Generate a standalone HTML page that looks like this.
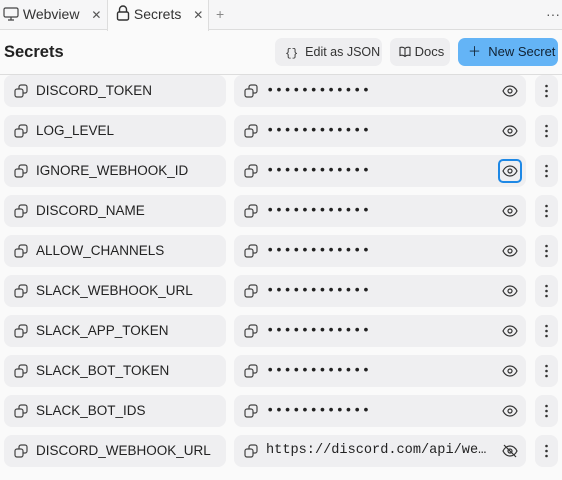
<!DOCTYPE html><html><head><style>
*{box-sizing:border-box;margin:0;padding:0}
body{width:562px;height:477px;background:#fafafa;font-family:"Liberation Sans",sans-serif;color:#222;position:relative;overflow:hidden}
.tabs{position:absolute;left:0;top:0;width:562px;height:30px;background:#f6f6f7;border-bottom:1px solid #ddd}
.tab{position:absolute;top:0;height:30px;font-size:14px;line-height:28px;color:#333;white-space:nowrap}
.act{left:107px;width:102px;background:#fafafa;border-left:1px solid #ddd;border-right:1px solid #ddd;height:31px}
h1{position:absolute;left:4px;top:43px;font-size:16.5px;font-weight:bold}
.btn{position:absolute;top:38px;height:28px;border-radius:7px;background:#eeeef0;font-size:13px;line-height:28px;color:#333;white-space:nowrap}
.hr{position:absolute;left:0;top:74px;width:562px;height:1px;background:#ddd}
.p{position:absolute;height:32px;background:#efeff1;border-radius:8px;font-size:13.5px;line-height:32px;white-space:nowrap}
.n{left:4px;width:222px;padding-left:32px}
.v{left:234px;width:292px;padding-left:32px;font-family:"Liberation Mono",monospace;font-size:14px;letter-spacing:0.3px}
.m{left:535px;width:23px}
.ic{position:absolute;left:10px;top:9px}
.eye{position:absolute;right:8px;top:10px;line-height:0}
.dots{position:absolute;left:10px;top:9px}
.vt{display:inline-block;width:230px;overflow:hidden}
</style></head><body>
<div class="tabs">
<div class="tab" style="left:3px"><svg width="16" height="14" style="vertical-align:-2px" viewBox="0 0 16 14" fill="none" stroke="#444" stroke-width="1.2"><rect x="1" y="1" width="14" height="9" rx="1.5"/><path d="M8 10v3M5 13h6"/></svg> Webview <span style="margin-left:8px;font-size:12px;color:#555">✕</span></div>
<div class="tab act"><span style="position:absolute;left:8px;top:0"><svg width="14" height="16" style="vertical-align:-2px" viewBox="0 0 14 16" fill="none" stroke="#333" stroke-width="1.4"><path d="M3.5 7V4.5a3.5 3.5 0 0 1 7 0V7"/><rect x="1.5" y="7" width="11" height="8" rx="1.5"/></svg> Secrets <span style="margin-left:8px;font-size:12px;color:#555">✕</span></span></div>
<div class="tab" style="left:216px;color:#888">+</div>
<div class="tab" style="left:546px;color:#555">···</div>
</div>
<h1>Secrets</h1>
<div class="btn" style="left:275px;width:107px;padding-left:10px;font-size:12.5px"><span style="font-family:'Liberation Mono';font-size:11px">{}</span>&nbsp; Edit as JSON</div>
<div class="btn" style="left:390px;width:60px;padding-left:9px"><svg width="12" height="11" viewBox="0 0 12 11" fill="none" stroke="#333" stroke-width="1.1" style="vertical-align:-1px"><path d="M6 2.5C4.5 1 2.5 1 1 1.5v8C2.5 9 4.5 9 6 10.5 7.5 9 9.5 9 11 9.5v-8C9.5 1 7.5 1 6 2.5zM6 2.5v8"/></svg> Docs</div>
<div class="btn" style="left:458px;width:100px;background:#64b4f6;color:#123;padding-left:10px">＋&nbsp; New Secret</div>
<div class="hr"></div>
<div id="rows"></div>
<script>
var names=["DISCORD_TOKEN","LOG_LEVEL","IGNORE_WEBHOOK_ID","DISCORD_NAME","ALLOW_CHANNELS","SLACK_WEBHOOK_URL","SLACK_APP_TOKEN","SLACK_BOT_TOKEN","SLACK_BOT_IDS","DISCORD_WEBHOOK_URL"];
var copy='<svg class="ic" width="14" height="14" viewBox="0 0 14 14" fill="none" stroke="#444" stroke-width="1.2"><rect x="1" y="5" width="8" height="8" rx="2"/><path d="M5 5V3a2 2 0 0 1 2-2h4a2 2 0 0 1 2 2v4a2 2 0 0 1-2 2H9"/></svg>';
var eye='<svg width="16" height="12" viewBox="0 0 16 12" fill="none" stroke="#333" stroke-width="1.2"><path d="M1 6C3 2 6 1 8 1s5 1 7 5c-2 4-5 5-7 5S3 10 1 6z"/><circle cx="8" cy="6" r="2"/></svg>';
var eyeOff='<svg width="16" height="14" viewBox="0 0 16 14" fill="none" stroke="#333" stroke-width="1.2"><path d="M1 7C3 3 6 2 8 2s5 1 7 5c-2 4-5 5-7 5S3 11 1 7z"/><circle cx="8" cy="7" r="2"/><path d="M2 1l12 12"/></svg>';
var h='';
names.forEach(function(n,i){var y=75+i*40;
var last=i==9;
h+='<div class="p n" style="top:'+y+'px">'+copy+n+'</div>';
h+='<div class="p v" style="top:'+y+'px">'+copy+'<span class="vt"'+(last?' style="letter-spacing:0;font-size:13.6px"':'')+'>'+(last?'https://discord.com/api/we…':'••••••••••••')+'</span>'+
(i==2?'<span class="eye" style="right:4px;top:4px;width:24px;height:24px;border:2px solid #1e88e5;border-radius:5px;padding:4px 2px">'+eye+'</span>':'<span class="eye"'+(last?' style="top:9px"':'')+'>'+(last?eyeOff:eye)+'</span>')+'</div>';
h+='<div class="p m" style="top:'+y+'px"><svg class="dots" width="3" height="14"><circle cx="1.5" cy="2" r="1.3" fill="#333"/><circle cx="1.5" cy="7" r="1.3" fill="#333"/><circle cx="1.5" cy="12" r="1.3" fill="#333"/></svg></div>';});
document.getElementById('rows').innerHTML=h;
</script>
</body></html>
